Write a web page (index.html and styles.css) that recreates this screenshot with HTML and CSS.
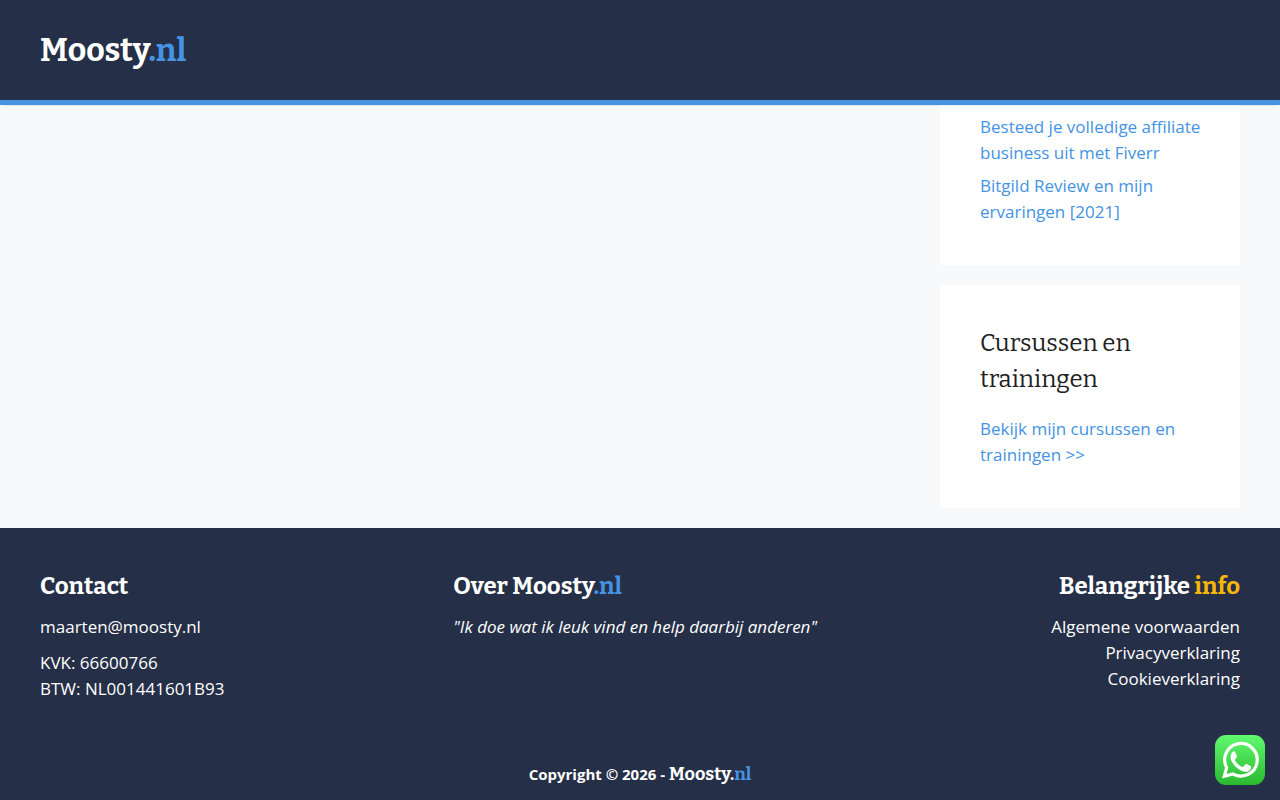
FILE: index.html
```
<!DOCTYPE html>
<html lang="nl">
<head>
  <meta charset="UTF-8">
  <meta name="viewport" content="width=device-width, initial-scale=1">
  <title>Moosty.nl</title>
  <link rel="stylesheet" href="styles.css">
</head>
<body>
  <!-- Site header -->
  <header class="site-header">
    <a class="site-title" href="#">Moosty<span class="blue">.nl</span></a>
  </header>

  <!-- Content with right sidebar -->
  <div class="site-content">
    <main class="content-area"></main>
    <aside class="sidebar">
      <section class="widget recent-posts">
        <ul>
          <li><a href="#">Besteed je volledige affiliate business uit met Fiverr</a></li>
          <li><a href="#">Bitgild Review en mijn ervaringen [2021]</a></li>
        </ul>
      </section>
      <section class="widget">
        <h2>Cursussen en trainingen</h2>
        <p><a href="#">Bekijk mijn cursussen en trainingen &gt;&gt;</a></p>
      </section>
    </aside>
  </div>

  <!-- Footer -->
  <footer class="site-footer">
    <div class="footer-widgets">
      <div class="footer-col">
        <h3>Contact</h3>
        <p><a href="#">maarten@moosty.nl</a></p>
        <p>KVK: 66600766<br>BTW: NL001441601B93</p>
      </div>
      <div class="footer-col">
        <h3>Over Moosty<span class="blue">.nl</span></h3>
        <p><em>"Ik doe wat ik leuk vind en help daarbij anderen"</em></p>
      </div>
      <div class="footer-col align-right">
        <h3>Belangrijke <span class="yellow">info</span></h3>
        <p>
          <a href="#">Algemene voorwaarden</a><br>
          <a href="#">Privacyverklaring</a><br>
          <a href="#">Cookieverklaring</a>
        </p>
      </div>
    </div>
    <div class="copyright">
      Copyright © 2026 - <span class="brand">Moosty.<span class="blue">nl</span></span>
    </div>
  </footer>

  <!-- WhatsApp chat button -->
  <a class="whatsapp" href="#" aria-label="WhatsApp">
    <svg viewBox="0 0 50 50" width="50" height="50">
      <defs>
        <linearGradient id="wa-green" x1="0" y1="0" x2="0" y2="1">
          <stop offset="0" stop-color="#5ffa70"/>
          <stop offset="1" stop-color="#2bb82f"/>
        </linearGradient>
      </defs>
      <rect width="50" height="50" rx="11" fill="url(#wa-green)"/>
      <path d="M9.3 41.3 L11.7 32.7 A16.3 16.3 0 1 1 17.8 38.9 Z" fill="none" stroke="#fff" stroke-width="3.2" stroke-linejoin="miter"/>
      <path d="M18.6 16.3 c.7 0 1.3 0 1.7 1 l1.6 3.8 c.2.6.1 1-.2 1.5 l-1.5 1.9 c-.4.5-.3.8 0 1.3 1.7 2.8 3.8 4.7 6.9 6 .6.3 1 .2 1.4-.2 l1.7-2.1 c.4-.5.8-.6 1.4-.4 l3.8 1.8 c.7.3.9.6.8 1.3 -.3 2.8-2.5 4.5-5.3 4.5 -3.3 0-7.8-2.3-11.4-6.3 -2.7-3-4-5.7-4-8.3 0-2.5 1-4.1 2-5.1 .4-.5.7-.7 1.1-.7z" fill="#fff"/>
    </svg>
  </a>
</body>
</html>
```
FILE: styles.css
```
* {
  box-sizing: border-box;
}
body {
  margin: 0;
  font-family: "Open Sans", sans-serif;
  font-size: 17px;
  line-height: 26px;
  color: #212121;
  background-color: #f7f9fa;
}
h2, h3, p, ul {
  margin: 0;
  padding: 0;
}
a {
  color: #4593e3;
  text-decoration: none;
}
.blue { color: #4593e3; }
.yellow { color: #f7b708; }

/* Header */
.site-header {
  position: sticky;
  top: 0;
  z-index: 10;
  display: flex;
  align-items: center;
  height: 105px;
  padding: 0 40px;
  background: #252f47;
  border-bottom: 5px solid #4593e3;
  box-shadow: 0 2px 2px -2px rgba(0, 0, 0, 0.2);
}
.site-title {
  font-family: Bitter, "DejaVu Serif", serif;
  font-size: 32px;
  font-weight: bold;
  line-height: 36px;
  color: #fff;
}

/* Content and sidebar */
.site-content {
  display: flex;
  padding: 0 40px 20px;
}
.content-area {
  flex: 1;
}
.sidebar {
  display: flex;
  flex-direction: column;
  gap: 20px;
  width: 25%;
}
.widget {
  padding: 40px 36px 40px 40px;
  background: #fff;
}
.recent-posts {
  padding-top: 9px;
}
.widget ul {
  display: flex;
  flex-direction: column;
  gap: 7px;
  list-style: none;
}
.widget h2 {
  margin-bottom: 19px;
  font-family: Bitter, "DejaVu Serif", serif;
  font-size: 24px;
  font-weight: normal;
  line-height: 36px;
}

/* Footer */
.site-footer {
  color: #fff;
  background: #252f47;
}
.site-footer a {
  color: #fff;
}
.footer-widgets {
  display: grid;
  grid-template-columns: repeat(3, 1fr);
  gap: 40px;
  padding: 40px;
}
.footer-col {
  display: flex;
  flex-direction: column;
  gap: 10px;
}
.footer-col h3 {
  font-family: Bitter, "DejaVu Serif", serif;
  font-size: 24px;
  line-height: 36px;
}
.align-right {
  text-align: right;
}
.site-footer .blue { color: #4593e3; }
.copyright {
  padding: 20px 40px 14px;
  font-size: 15px;
  font-weight: bold;
  line-height: 24px;
  text-align: center;
}
.brand {
  font-family: Bitter, "DejaVu Serif", serif;
  font-size: 18px;
}

/* Floating chat button */
.whatsapp {
  position: fixed;
  right: 15px;
  bottom: 15px;
  z-index: 20;
}
.whatsapp svg {
  display: block;
}
```
